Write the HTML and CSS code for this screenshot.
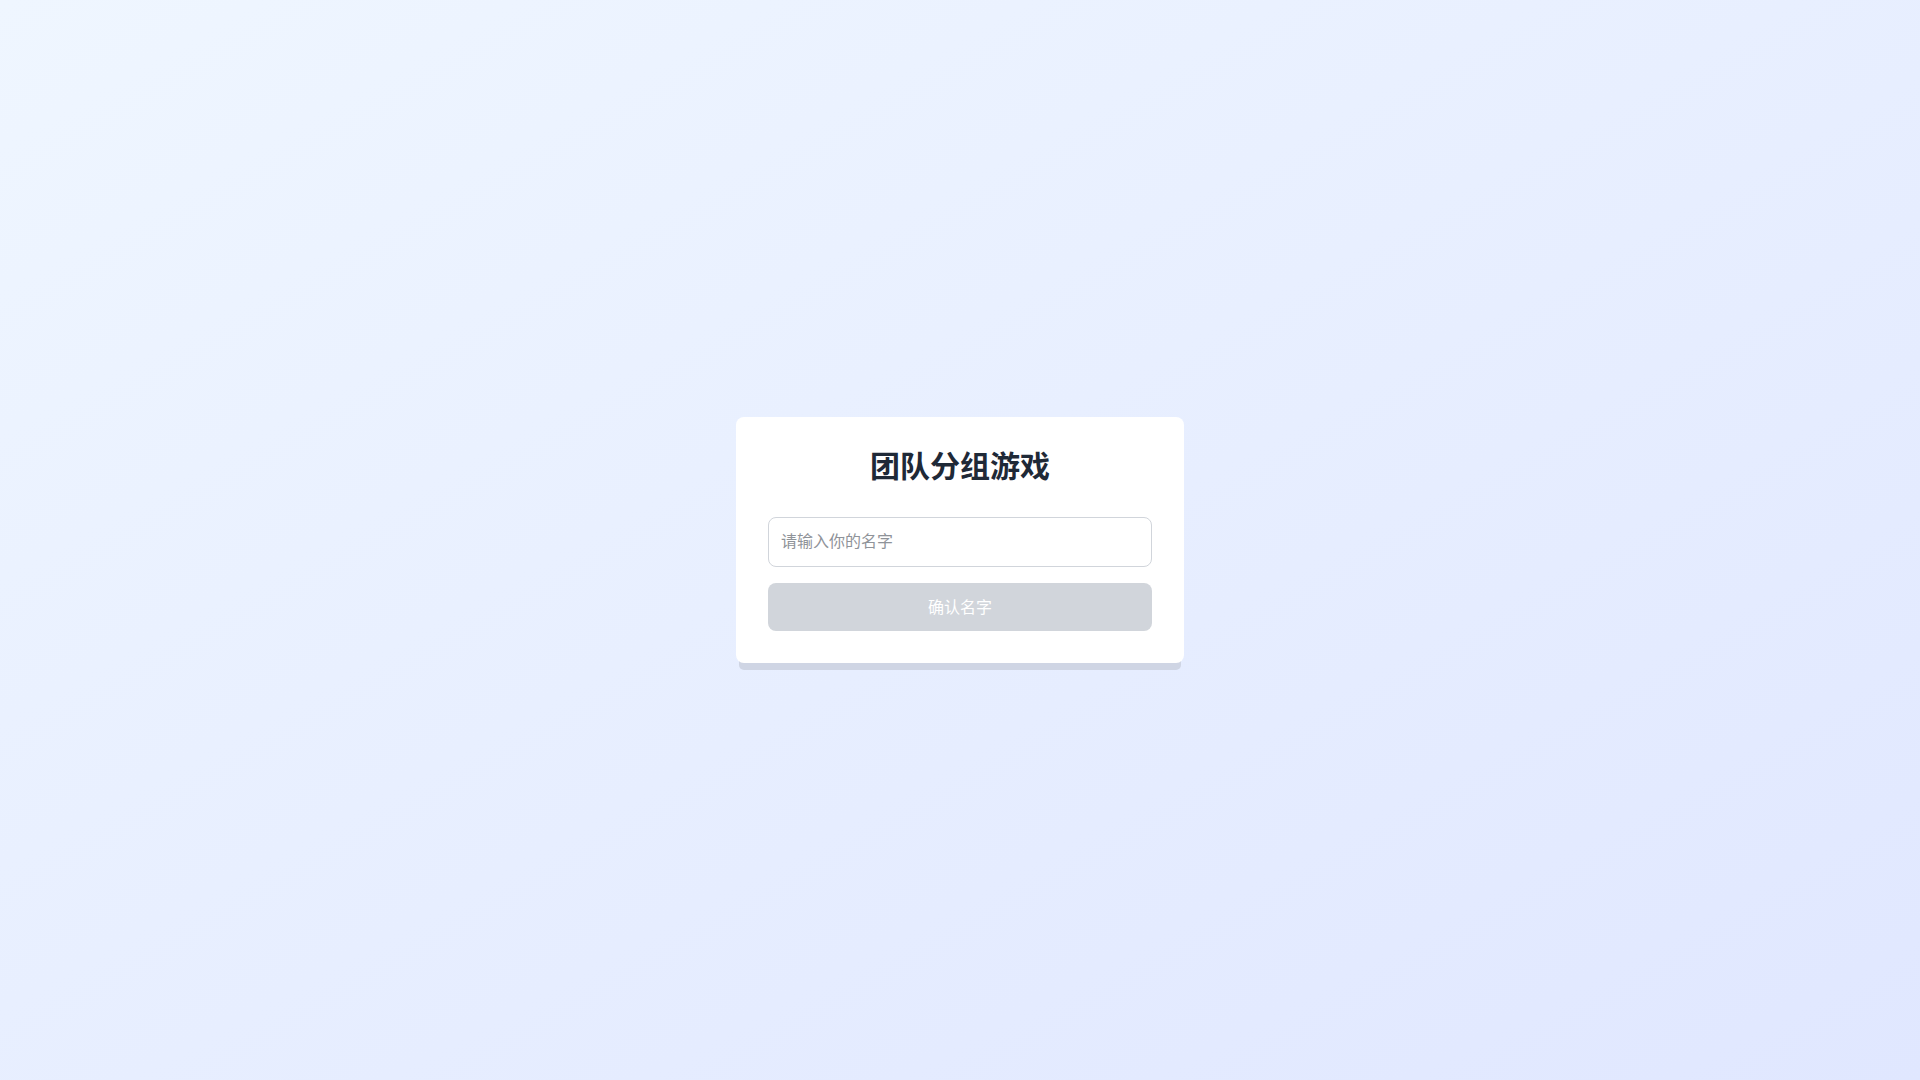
FILE: index.html
```html
<!DOCTYPE html>
<html lang="zh-CN">
<head>
<meta charset="utf-8">
<title>团队分组游戏</title>
<link rel="stylesheet" href="styles.css">
</head>
<body>
<main class="page">
  <div class="card">
    <h1 class="title">团队分组游戏</h1>
    <input class="name-input" type="text" placeholder="请输入你的名字">
    <button class="confirm-btn" type="button" disabled>确认名字</button>
  </div>
</main>
</body>
</html>
```

FILE: styles.css
```css
* { box-sizing: border-box; }
html, body { margin: 0; padding: 0; height: 100%; }
body {
  font-family: "Noto Sans CJK SC", "Noto Sans", sans-serif;
  background: linear-gradient(to bottom right, #eff6ff, #e0e7ff);
}
.page {
  min-height: 100vh;
  display: flex;
  align-items: center;
  justify-content: center;
}
.card {
  width: 448px;
  background: #ffffff;
  border-radius: 8px;
  padding: 32px;
  display: flex;
  flex-direction: column;
  box-shadow: 0 10px 0 -3px #cfd5e4;
}
.title {
  margin: 0 0 38px;
  font-size: 30px;
  line-height: 30px;
  font-weight: 700;
  color: #1f2937;
  text-align: center;
}
.name-input {
  width: 100%;
  height: 50px;
  padding: 10px 12px 14px;
  font-family: inherit;
  font-size: 16px;
  line-height: 24px;
  border: 1px solid #d1d5db;
  border-radius: 8px;
  margin: 0 0 16px;
  outline: none;
  color: #1f2937;
  background: #fff;
}
.name-input::placeholder { color: #8f9399; }
.confirm-btn {
  width: 100%;
  height: 48px;
  border: none;
  border-radius: 8px;
  background: #d1d5db;
  color: #ffffff;
  font-family: inherit;
  font-size: 16px;
  line-height: 24px;
  padding: 0 0 2px;
}
```
